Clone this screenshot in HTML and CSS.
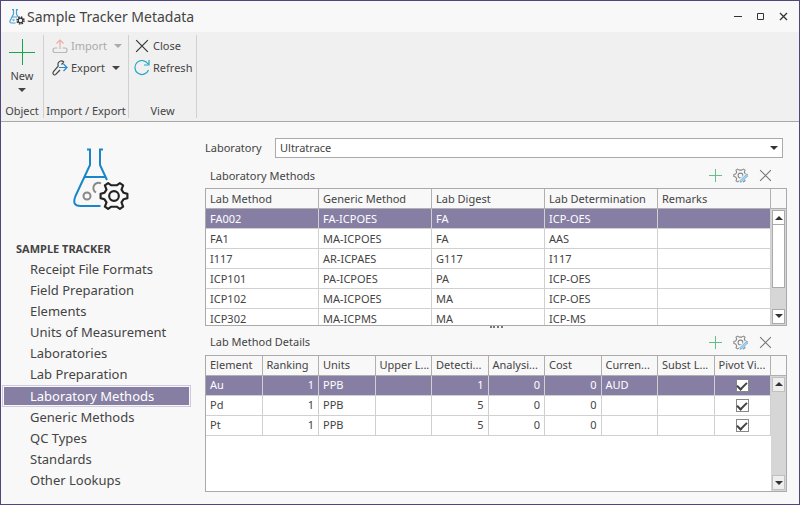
FILE: index.html
```html
<!DOCTYPE html>
<html lang="en">
<head>
<meta charset="utf-8">
<title>Sample Tracker Metadata</title>
<link rel="stylesheet" href="styles.css">
</head>
<body>
<svg class="defs" aria-hidden="true">
  <symbol id="flask" viewBox="0 0 56 62">
    <g fill="none" stroke="#1a86c8" stroke-width="2">
      <path d="M14 1.500h4M26 1.500h4M17 2v15L2.500 48q-4 10 5 10h20M27 2v15l7 15M12 29h21"/>
    </g>
    <circle cx="14" cy="48" r="3.500" fill="none" stroke="#888" stroke-width="2"/>
    <path d="M28 35.500a5 5 0 0 0-5 9" fill="none" stroke="#888" stroke-width="2"/>
    <use href="#gear" x="26" y="33" width="30" height="30" color="#222"/>
  </symbol>
  <symbol id="gear" viewBox="0 0 28 28">
    <path d="M11 5 12 1.500h4L17 5l3 2 4-1.500 2 3-2 3v5l2 3-2 3-4-1.500-3 2-1 3.500h-4l-1-3.500-3-2-4 1.500-2-3 2-3v-5l-2-3 2-3L8 7z" transform="rotate(90 14 14)" fill="#f8f8f8" stroke="currentColor" stroke-width="2" stroke-linejoin="round"/>
    <circle cx="14" cy="14" r="4.500" fill="none" stroke="currentColor" stroke-width="2"/>
  </symbol>
  <symbol id="plus" viewBox="0 0 15 15"><path d="M7.500 1v13M1 7.500h13" stroke="#62c088" fill="none"/></symbol>
  <symbol id="cross" viewBox="0 0 12 12"><path d="M1 1l10 10M11 1L1 11" stroke="currentColor" fill="none"/></symbol>
  <symbol id="edit" viewBox="0 0 16 16">
    <use href="#gear" x="0" y="0" width="16" height="16" color="#888"/>
    <path d="M6 16l1-4 6-6 3 2-6 7z" fill="#f8f8f8"/>
    <path d="M7.500 15.300l.5-2.300L14 7l1.500 1.500-6 6z" fill="#a9d4f1" stroke="#6fb5e2"/>
  </symbol>
  <symbol id="up" viewBox="0 0 8 4"><path d="M0 4l4-4 4 4z" fill="currentColor"/></symbol>
  <symbol id="down" viewBox="0 0 8 4"><path d="M0 0h8L4 4z" fill="currentColor"/></symbol>
</svg>
<div class="window">
  <header class="titlebar">
    <svg class="app-icon" viewBox="0 0 16 16"><path d="M3 .7h2m2 0h2M4.500 1v4L1 12q-.5 2 1.500 2h4M7.500 1v4l1.500 3M3 8h5" fill="none" stroke="#4a9fd4" stroke-width="1.200"/><circle cx="4.500" cy="11" r="1.200" fill="#7ab8de"/><circle cx="11.500" cy="11.500" r="2.300" fill="#f8f8f8" stroke="#333" stroke-width="1.200"/><circle cx="11.500" cy="11.500" r="3.500" fill="none" stroke="#333" stroke-width="1.500" stroke-dasharray="1.500 1.250"/></svg>
    <h1>Sample Tracker Metadata</h1>
    <div class="window-buttons">
      <button aria-label="Minimize"><svg viewBox="0 0 9 9"><path d="M1 4.500h8" stroke="#333"/></svg></button>
      <button aria-label="Maximize"><svg viewBox="0 0 9 9"><path d="M1.500 1.500h6v6h-6z" stroke="#333" fill="none"/></svg></button>
      <button aria-label="Close window"><svg viewBox="0 0 9 9"><path d="M1 1l7 7M8 1L1 8" stroke="#333" stroke-width="1.300"/></svg></button>
    </div>
  </header>
  <div class="ribbon">
    <section class="group object">
      <button class="new"><svg class="big-plus" viewBox="0 0 28 28"><path d="M14.500 1v26M1 14.500h26" stroke="#12a84c" fill="none"/></svg><span>New</span><svg class="arrow"><use href="#down"/></svg></button>
      <h2>Object</h2>
    </section>
    <section class="group transfer">
      <button class="command" disabled><svg class="icon" viewBox="0 0 16 16"><path d="M8 11V2M4.500 5.500L8 2l3.500 3.500" fill="none" stroke="#f0aaa8" stroke-width="1.200"/><path d="M5.500 10H3q-2 0-2 2.200T3 14.500h10q2 0 2-2.300T13 10h-2.500" fill="none" stroke="#b8b8b8" stroke-width="1.200"/></svg><span>Import</span><svg class="arrow"><use href="#down"/></svg></button>
      <button class="command"><svg class="icon" viewBox="0 0 16 16"><path d="M12 2Q8-.5 6.200 3q-.5 1 0 3.200L1.500 11.500Q0 14 2.500 15q1 0 1.500-.8L8 10M12 2L9.500 4.500" fill="none" stroke="#444" stroke-width="1.200"/><path d="M7 7.500h8M11.500 4l3.500 3.500-3.500 3.500" fill="none" stroke="#2587d0" stroke-width="1.200"/></svg><span>Export</span><svg class="arrow"><use href="#down"/></svg></button>
      <h2>Import / Export</h2>
    </section>
    <section class="group view">
      <button class="command"><svg class="icon close"><use href="#cross"/></svg><span>Close</span></button>
      <button class="command"><svg class="icon" viewBox="0 0 16 16"><path d="M14.500 10A7 7 0 1 1 14 4M15 0v5h-5" fill="none" stroke="#22a9c4" stroke-width="1.200"/></svg><span>Refresh</span></button>
      <h2>View</h2>
    </section>
  </div>
  <div class="body">
    <nav class="sidebar">
      <svg class="logo"><use href="#flask"/></svg>
      <h2>SAMPLE TRACKER</h2>
      <a href="#">Receipt File Formats</a>
      <a href="#">Field Preparation</a>
      <a href="#">Elements</a>
      <a href="#">Units of Measurement</a>
      <a href="#">Laboratories</a>
      <a href="#">Lab Preparation</a>
      <a href="#" class="current" aria-current="page">Laboratory Methods</a>
      <a href="#">Generic Methods</a>
      <a href="#">QC Types</a>
      <a href="#">Standards</a>
      <a href="#">Other Lookups</a>
    </nav>
    <main>
      <div class="field">
        <label for="laboratory">Laboratory</label>
        <div class="select"><select id="laboratory"><option>Ultratrace</option></select><svg class="arrow"><use href="#down"/></svg></div>
      </div>
      <section class="panel">
        <div class="panel-head">
          <h3>Laboratory Methods</h3>
          <button aria-label="Add method"><svg><use href="#plus"/></svg></button>
          <button aria-label="Edit method"><svg><use href="#edit"/></svg></button>
          <button aria-label="Delete method"><svg class="delete"><use href="#cross"/></svg></button>
        </div>
        <div class="grid">
          <div class="rows">
            <table>
              <thead><tr><th>Lab Method</th><th>Generic Method</th><th>Lab Digest</th><th>Lab Determination</th><th>Remarks</th></tr></thead>
              <tbody>
                <tr class="selected"><td>FA002</td><td>FA-ICPOES</td><td>FA</td><td>ICP-OES</td><td></td></tr>
                <tr><td>FA1</td><td>MA-ICPOES</td><td>FA</td><td>AAS</td><td></td></tr>
                <tr><td>I117</td><td>AR-ICPAES</td><td>G117</td><td>I117</td><td></td></tr>
                <tr><td>ICP101</td><td>PA-ICPOES</td><td>PA</td><td>ICP-OES</td><td></td></tr>
                <tr><td>ICP102</td><td>MA-ICPOES</td><td>MA</td><td>ICP-OES</td><td></td></tr>
                <tr><td>ICP302</td><td>MA-ICPMS</td><td>MA</td><td>ICP-MS</td><td></td></tr>
              </tbody>
            </table>
          </div>
          <div class="scroll-column">
            <div class="corner"></div>
            <div class="scrollbar">
              <button aria-label="Scroll up"><svg><use href="#up"/></svg></button>
              <div class="track"><div class="thumb"></div></div>
              <button aria-label="Scroll down"><svg><use href="#down"/></svg></button>
            </div>
          </div>
        </div>
      </section>
      <div class="splitter"></div>
      <section class="panel">
        <div class="panel-head">
          <h3>Lab Method Details</h3>
          <button aria-label="Add detail"><svg><use href="#plus"/></svg></button>
          <button aria-label="Edit detail"><svg><use href="#edit"/></svg></button>
          <button aria-label="Delete detail"><svg class="delete"><use href="#cross"/></svg></button>
        </div>
        <div class="grid">
          <div class="rows">
            <table>
              <thead><tr><th>Element</th><th>Ranking</th><th>Units</th><th>Upper L...</th><th>Detecti...</th><th>Analysi...</th><th>Cost</th><th>Curren...</th><th>Subst L...</th><th>Pivot Vi...</th></tr></thead>
              <tbody>
                <tr class="selected"><td>Au</td><td class="num">1</td><td>PPB</td><td></td><td class="num">1</td><td class="num">0</td><td class="num">0</td><td>AUD</td><td></td><td class="check"><input type="checkbox" aria-label="Pivot Au" checked></td></tr>
                <tr><td>Pd</td><td class="num">1</td><td>PPB</td><td></td><td class="num">5</td><td class="num">0</td><td class="num">0</td><td></td><td></td><td class="check"><input type="checkbox" aria-label="Pivot Pd" checked></td></tr>
                <tr><td>Pt</td><td class="num">1</td><td>PPB</td><td></td><td class="num">5</td><td class="num">0</td><td class="num">0</td><td></td><td></td><td class="check"><input type="checkbox" aria-label="Pivot Pt" checked></td></tr>
              </tbody>
            </table>
          </div>
          <div class="scroll-column">
            <div class="corner"></div>
            <div class="scrollbar idle">
              <button aria-label="Scroll up"><svg><use href="#up"/></svg></button>
              <div class="track"></div>
              <button aria-label="Scroll down"><svg><use href="#down"/></svg></button>
            </div>
          </div>
        </div>
      </section>
    </main>
  </div>
</div>
</body>
</html>
```
FILE: styles.css
```css
* { box-sizing: border-box; }
body { margin: 0; font: 11px/16px "Noto Sans", "Open Sans", sans-serif; color: #444; }
h1, h2, h3 { margin: 0; font-size: inherit; font-weight: 400; }
button { border: 0; padding: 0; background: none; font: inherit; color: inherit; }
svg { display: block; flex: none; }
.defs { position: absolute; width: 0; height: 0; }
.arrow { width: 8px; height: 4px; }

.window { display: flex; flex-direction: column; height: 100vh; border: 1px solid #51457f; background: #f8f8f8; }

.titlebar { display: flex; align-items: center; height: 31px; padding: 0 11px 0 8px; }
.app-icon { width: 16px; height: 16px; margin-right: 2px; }
.titlebar h1 { flex: 1; font-size: 14px; line-height: 20px; }
.window-buttons { display: flex; gap: 14px; }
.window-buttons svg { width: 9px; height: 9px; }

.ribbon { display: flex; height: 90px; padding: 3px 0; background: #f0f0f0; border-bottom: 1px solid #a8a8a8; }
.group { display: flex; flex-direction: column; border-right: 1px solid #d0d0d0; }
.group h2 { margin-top: auto; line-height: 14px; text-align: center; white-space: nowrap; }
.object { width: 43px; }
.transfer { width: 85px; }
.view { width: 68px; }
.new { display: flex; flex-direction: column; align-items: center; line-height: 20px; padding-top: 3px; }
.new .arrow { margin-top: 2px; }
.big-plus { width: 28px; height: 28px; }
.command { display: flex; align-items: center; gap: 3px; height: 22px; padding-left: 8px; }
.view .command { padding-left: 5px; }
.command:disabled { color: #aaa; }
.command .arrow { margin-left: 4px; }
.icon { width: 16px; height: 16px; }
.close { padding: 1px; color: #333; }

.body { display: flex; flex: 1; min-height: 0; }
.sidebar { width: 190px; flex: none; padding-top: 26px; margin-right: 14px; }
.logo { width: 56px; height: 62px; margin-left: 72px; }
.sidebar h2 { margin: 28px 0 0 15px; line-height: 21px; font-weight: 700; }
.sidebar a { display: block; padding-left: 29px; font-size: 13px; line-height: 21px; color: #444; text-decoration: none; }
.sidebar .current { margin-left: 1px; padding-left: 27px; line-height: 20px; background: #867ea3; color: #fff; border: 1px solid #cfcadd; box-shadow: inset 0 0 0 1px #f8f8f8; }

main { display: flex; flex-direction: column; flex: 1; min-width: 0; padding: 16px 12px 12px 0; }
.field { display: flex; align-items: center; height: 20px; margin: 0 4px 5px 0; }
.field label { width: 70px; }
.select { position: relative; flex: 1; }
.select select { display: block; width: 100%; height: 20px; padding: 0 4px; border: 1px solid #aaa; border-radius: 0; appearance: none; background: #fff; font: inherit; color: inherit; }
.select .arrow { position: absolute; right: 5px; top: 8px; color: #333; }

.panel { display: flex; flex-direction: column; flex: 1 1 0; min-height: 0; }
.panel-head { display: flex; align-items: center; gap: 10px; height: 25px; flex: none; padding: 0 14px 0 5px; }
.panel-head h3 { flex: 1; }
.panel-head svg { width: 15px; height: 15px; color: #777; }
.panel-head .delete { padding: 1px; }
.splitter { width: 13px; height: 4px; margin: 0 auto; border-top: 2px dotted #777; flex: none; }

.grid { display: flex; flex: 1; min-height: 0; border: 1px solid #aaa; background: #fff; }
.rows { flex: 1; min-width: 0; overflow: hidden; }
table { width: 100%; table-layout: fixed; border-collapse: separate; border-spacing: 0; }
th, td { height: 20px; padding: 0 4px; border: solid #d0d0d0; border-width: 0 1px 1px 0; line-height: 18px; font-weight: 400; text-align: left; white-space: nowrap; overflow: hidden; }
th { background: #f8f8f8; border-color: #b0b0b0; }
.num { text-align: right; }
.selected td { background: #867ea3; color: #fff; }
.check input { display: block; width: 13px; height: 13px; margin: 0 auto; border: 1px solid #888; border-radius: 0; appearance: none; background: #fff; }
.check input:checked::after { content: ""; display: block; width: 4px; height: 8px; margin: 0 auto; border: solid #444; border-width: 0 2px 2px 0; transform: rotate(45deg); }

.scroll-column { display: flex; flex-direction: column; width: 15px; flex: none; }
.corner { height: 20px; flex: none; background: #f8f8f8; border-bottom: 1px solid #b0b0b0; }
.scrollbar { display: flex; flex-direction: column; flex: 1; min-height: 0; padding: 1px; background: #d6d6d6; }
.scrollbar button { display: flex; align-items: center; justify-content: center; height: 15px; flex: none; border: 1px solid #aaa; background: #fff; color: #333; }
.scrollbar button svg { width: 8px; height: 4px; }
.track { flex: 1; }
.thumb { height: 75%; border: 1px solid #aaa; border-top: 0; background: #fff; }
.idle button { border-color: #c0c0c0; background: #eee; }
```
